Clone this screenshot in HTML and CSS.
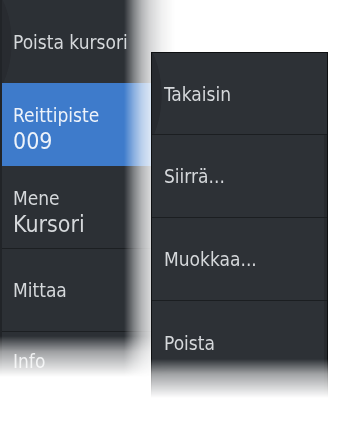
FILE: index.html
```html
<!DOCTYPE html>
<html lang="fi">
<head>
<meta charset="utf-8">
<title>Valikko</title>
<link rel="stylesheet" href="styles.css">
</head>
<body>
<div class="stage">
  <div class="menu-left">
    <div class="menu-left-inner">
      <div class="item item-first"><span class="label">Poista kursori</span></div>
      <div class="item item-two item-selected">
        <span class="label">Reittipiste</span>
        <span class="value">009</span>
      </div>
      <div class="item item-two item-sep">
        <span class="label">Mene</span>
        <span class="value">Kursori</span>
      </div>
      <div class="item item-sep"><span class="label">Mittaa</span></div>
      <div class="item item-last"><span class="label">Info</span></div>
    </div>
  </div>
  <div class="menu-right">
    <div class="ritem ritem-first"><span class="label">Takaisin</span></div>
    <div class="ritem"><span class="label">Siirrä...</span></div>
    <div class="ritem"><span class="label">Muokkaa...</span></div>
    <div class="ritem ritem-last"><span class="label">Poista</span></div>
  </div>
</div>
</body>
</html>
```
FILE: styles.css
```css
html, body {
  margin: 0;
  padding: 0;
  background: #ffffff;
}
body {
  width: 359px;
  height: 427px;
  overflow: hidden;
  font-family: "DejaVu Sans Condensed", "DejaVu Sans", "Liberation Sans", sans-serif;
  color: #d5d8db;
}
.stage {
  display: flex;
  align-items: flex-start;
}
.menu-left {
  width: 175px;
  flex: none;
  -webkit-mask-image: linear-gradient(to right, #000 124px, rgba(0,0,0,0.6) 134px, rgba(0,0,0,0.35) 142px, rgba(0,0,0,0.2) 150px, rgba(0,0,0,0.07) 162px, transparent 175px);
  mask-image: linear-gradient(to right, #000 124px, rgba(0,0,0,0.6) 134px, rgba(0,0,0,0.35) 142px, rgba(0,0,0,0.2) 150px, rgba(0,0,0,0.07) 162px, transparent 175px);
}
.menu-left-inner {
  display: flex;
  flex-direction: column;
  background: #2c3035;
  border-left: 2px solid #212428;
  height: 390px;
  -webkit-mask-image: linear-gradient(to bottom, #000 336px, rgba(0,0,0,0.45) 352px, transparent 377px);
  mask-image: linear-gradient(to bottom, #000 336px, rgba(0,0,0,0.45) 352px, transparent 377px);
}
.item {
  height: 83px;
  flex: none;
  box-sizing: border-box;
  display: flex;
  flex-direction: column;
  justify-content: center;
  padding-left: 11px;
}
.item-two {
  padding-top: 9px;
}
.item-first {
  background:
    radial-gradient(ellipse 36px 64px at -26px 42px, #282b30 98%, rgba(0,0,0,0) 100%),
    #2c3035;
}
.item-selected {
  background: #3e7bcb;
  color: #eef3fa;
}
.item-sep {
  border-bottom: 1px solid #1c1f22;
}
.item-last {
  height: 58px;
}
.label {
  font-size: 19px;
  line-height: 24px;
}
.value {
  font-size: 23px;
  line-height: 28px;
}
.menu-right {
  flex: none;
  width: 177px;
  margin-left: -24px;
  margin-top: 52px;
  height: 348px;
  box-sizing: border-box;
  background: #2d3136;
  border: 1px solid #0e1012;
  border-bottom: none;
  box-shadow: inset -3px 0 0 #272a2e;
  display: flex;
  flex-direction: column;
  -webkit-mask-image: linear-gradient(to bottom, #000 307px, rgba(0,0,0,0.45) 322px, transparent 346px);
  mask-image: linear-gradient(to bottom, #000 307px, rgba(0,0,0,0.45) 322px, transparent 346px);
}
.ritem {
  height: 83px;
  flex: none;
  box-sizing: border-box;
  border-bottom: 1px solid #1b1e21;
  display: flex;
  align-items: center;
  padding-left: 12px;
}
.ritem-first {
  height: 82px;
  background:
    radial-gradient(ellipse 38px 66px at -28px 42px, #272a2f 98%, rgba(0,0,0,0) 100%),
    #2d3136;
}
.ritem-last {
  border-bottom: none;
}
```
